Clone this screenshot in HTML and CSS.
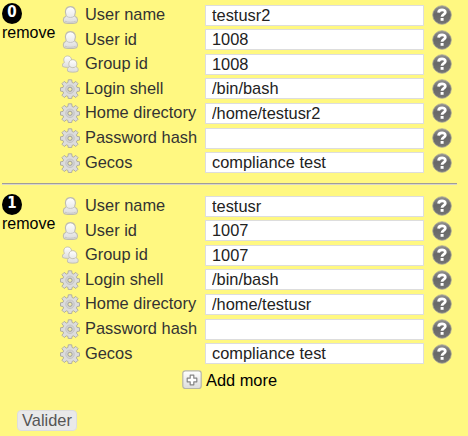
FILE: index.html
```html
<!DOCTYPE html>
<html lang="en">
<head>
<meta charset="utf-8">
<title>Users</title>
<link rel="stylesheet" href="styles.css">
</head>
<body>
<svg class="defs" width="0" height="0">
  <defs>
    <linearGradient id="light" x1="0" y1="0" x2="0" y2="1"><stop offset="0" stop-color="#fff"/><stop offset="1" stop-color="#dcdcdc"/></linearGradient>
    <linearGradient id="dark" x1="0" y1="0" x2="0" y2="1"><stop offset="0" stop-color="#939393"/><stop offset=".45" stop-color="#686868"/><stop offset="1" stop-color="#747474"/></linearGradient>
    <symbol id="user" viewBox="0 0 20 20">
      <path d="M4.200 17.500c-1.500-1.500-1-5 1-5.800.7-.3 1-.6 1-1C4 6.300 6 1.600 10.400 1.600s6.400 4.700 4.200 9.100c0 .4.300.7 1 1 2 .8 2.500 4.300 1 5.800-1.800 1.400-10.600 1.400-12.400 0z" fill="url(#light)" stroke="#bebcaf" stroke-width="1.100"/>
      <path d="M6.700 11.200c1.700 1.700 5.700 1.700 7.400 0M5 16.200c2.500 1.400 8.300 1.400 10.800 0" fill="none" stroke="#c6c6c6"/>
    </symbol>
    <symbol id="group" viewBox="0 0 20 20">
      <g fill="url(#light)" stroke="#bebcae" stroke-width=".9">
        <path d="M2.700 12.500c-.7-1.800.1-3.500 1.800-4.100C2.800 5.500 4.200 2 7.600 2s5 3.500 3.100 6.400c1.800.6 2.500 2.300 1.800 4.100-1.800 1.200-8 1.200-9.800 0z"/>
        <path d="M7.800 17.300c-.9-2-.1-4 1.800-4.600-1.800-3-.4-7 3.200-7s5 4 3.200 7c1.900.6 2.700 2.600 1.800 4.600-1.700 1.200-8.300 1.200-10 0z"/>
        <path d="M10 12.700c1.400 1.300 4.200 1.300 5.600 0" fill="none"/>
      </g>
    </symbol>
    <symbol id="gear" viewBox="0 0 20 20">
      <path fill="#dcdcdc" stroke="#aaa89c" stroke-width=".9" stroke-linejoin="round" d="M8.300.8h3.400l.4 2.700 1.500.6 2.200-1.700 2.300 2.300-1.700 2.200.6 1.500 2.500.4v3.300l-2.500.4-.6 1.500 1.700 2.200-2.300 2.300-2.200-1.700-1.500.6-.4 2.200H8.300l-.4-2.200-1.500-.6-2.200 1.700-2.300-2.300 1.700-2.200-.6-1.500-2.500-.4V8.800L3 8.400l.6-1.500-1.700-2.200 2.300-2.300 2.200 1.700 1.500-.6z"/>
      <circle cx="10" cy="10.300" r="4.300" fill="#d2d2d2" stroke="#c0c0c0" stroke-width=".8"/>
      <circle cx="10" cy="10.300" r="2.100" fill="#f1ecad" stroke="#929292" stroke-width=".8"/>
    </symbol>
    <symbol id="help" viewBox="0 0 20 20">
      <circle cx="10" cy="10" r="9.300" fill="url(#dark)" stroke="#aaa798" stroke-width=".8"/>
      <path d="M6.600 7.600c.1-3.500 6.700-3.700 6.700-.3 0 2.200-3.300 2.100-3.300 4.500" fill="none" stroke="#fff" stroke-width="2.800"/>
      <path d="M8.600 13h3v2.800h-3z" fill="#fff"/>
    </symbol>
    <symbol id="add" viewBox="0 0 20 20">
      <rect x=".8" y=".8" width="18.400" height="17.700" rx="2.500" fill="url(#light)" stroke="#b5b5a8" stroke-width="1.200"/>
      <path d="M8.200 5.200h3.600v3h3v3.600h-3v3H8.200v-3h-3V8.200h3z" fill="#fff" stroke="#858585" stroke-width="1.200" stroke-linejoin="round"/>
    </symbol>
  </defs>
</svg>
<form class="users">
  <section class="entry">
    <div class="side"><span class="badge">0</span><span class="remove">remove</span></div>
    <div class="fields">
      <div class="row"><svg class="icon"><use href="#user"/></svg><label>User name</label><input value="testusr2"><svg class="icon"><use href="#help"/></svg></div>
      <div class="row"><svg class="icon"><use href="#user"/></svg><label>User id</label><input value="1008"><svg class="icon"><use href="#help"/></svg></div>
      <div class="row"><svg class="icon"><use href="#group"/></svg><label>Group id</label><input value="1008"><svg class="icon"><use href="#help"/></svg></div>
      <div class="row"><svg class="icon"><use href="#gear"/></svg><label>Login shell</label><input value="/bin/bash"><svg class="icon"><use href="#help"/></svg></div>
      <div class="row"><svg class="icon"><use href="#gear"/></svg><label>Home directory</label><input value="/home/testusr2"><svg class="icon"><use href="#help"/></svg></div>
      <div class="row"><svg class="icon"><use href="#gear"/></svg><label>Password hash</label><input value=""><svg class="icon"><use href="#help"/></svg></div>
      <div class="row"><svg class="icon"><use href="#gear"/></svg><label>Gecos</label><input value="compliance test"><svg class="icon"><use href="#help"/></svg></div>
    </div>
  </section>
  <hr class="divider">
  <section class="entry">
    <div class="side"><span class="badge">1</span><span class="remove">remove</span></div>
    <div class="fields">
      <div class="row"><svg class="icon"><use href="#user"/></svg><label>User name</label><input value="testusr"><svg class="icon"><use href="#help"/></svg></div>
      <div class="row"><svg class="icon"><use href="#user"/></svg><label>User id</label><input value="1007"><svg class="icon"><use href="#help"/></svg></div>
      <div class="row"><svg class="icon"><use href="#group"/></svg><label>Group id</label><input value="1007"><svg class="icon"><use href="#help"/></svg></div>
      <div class="row"><svg class="icon"><use href="#gear"/></svg><label>Login shell</label><input value="/bin/bash"><svg class="icon"><use href="#help"/></svg></div>
      <div class="row"><svg class="icon"><use href="#gear"/></svg><label>Home directory</label><input value="/home/testusr"><svg class="icon"><use href="#help"/></svg></div>
      <div class="row"><svg class="icon"><use href="#gear"/></svg><label>Password hash</label><input value=""><svg class="icon"><use href="#help"/></svg></div>
      <div class="row"><svg class="icon"><use href="#gear"/></svg><label>Gecos</label><input value="compliance test"><svg class="icon"><use href="#help"/></svg></div>
    </div>
  </section>
  <div class="add"><svg class="icon"><use href="#add"/></svg><span>Add more</span></div>
  <button class="submit" type="button">Valider</button>
</form>
</body>
</html>
```
FILE: styles.css
```css
* { box-sizing: border-box; }
body {
  margin: 0;
  height: 436px;
  overflow: hidden;
  background: #fff881;
  color: #000;
  font: 16.400px/19px "Liberation Sans", Arial, sans-serif;
}
.defs { display: block; }
.users { width: 457px; padding: 3px 0 0 2px; }
.entry { display: flex; height: 180px; }
.side { width: 58px; }
.badge {
  display: block;
  width: 20px;
  height: 21px;
  border-radius: 50%;
  background: #000;
  color: #fff;
  font: bold 15px/18px "DejaVu Sans Condensed", "DejaVu Sans", sans-serif;
  text-align: center;
}
.remove { display: block; margin-top: -1px; font-size: 16px; }
.row {
  display: grid;
  grid-template-columns: 20px 115.500px 219px 20px;
  column-gap: 4.500px;
  align-items: center;
  height: 24.550px;
}
.icon { display: block; width: 20px; height: 20px; }
.row > .icon:last-child { margin-left: 4px; }
label { padding: 0 0 1px .5px; color: #333; white-space: nowrap; }
input {
  width: 219px;
  height: 21px;
  margin: 0 0 0 .5px;
  padding: 0 6px;
  border: 1px solid #ddd;
  border-radius: 0;
  background: #fff;
  color: #222;
  font: inherit;
}
.divider {
  height: 2px;
  margin: 0 0 9px;
  border: 0;
  border-top: 1px solid #a09d98;
  border-bottom: 1px solid #d8d6c8;
}
.add {
  display: flex;
  align-items: center;
  gap: 4px;
  height: 20px;
  margin: -4px 0 0 180px;
}
.submit {
  display: block;
  width: 60px;
  height: 21px;
  margin: 20px 0 0 15px;
  padding: 0;
  border: 1px solid #ddd;
  border-radius: 4px;
  background: #e9e9e9;
  color: #555;
  font: inherit;
}
```
